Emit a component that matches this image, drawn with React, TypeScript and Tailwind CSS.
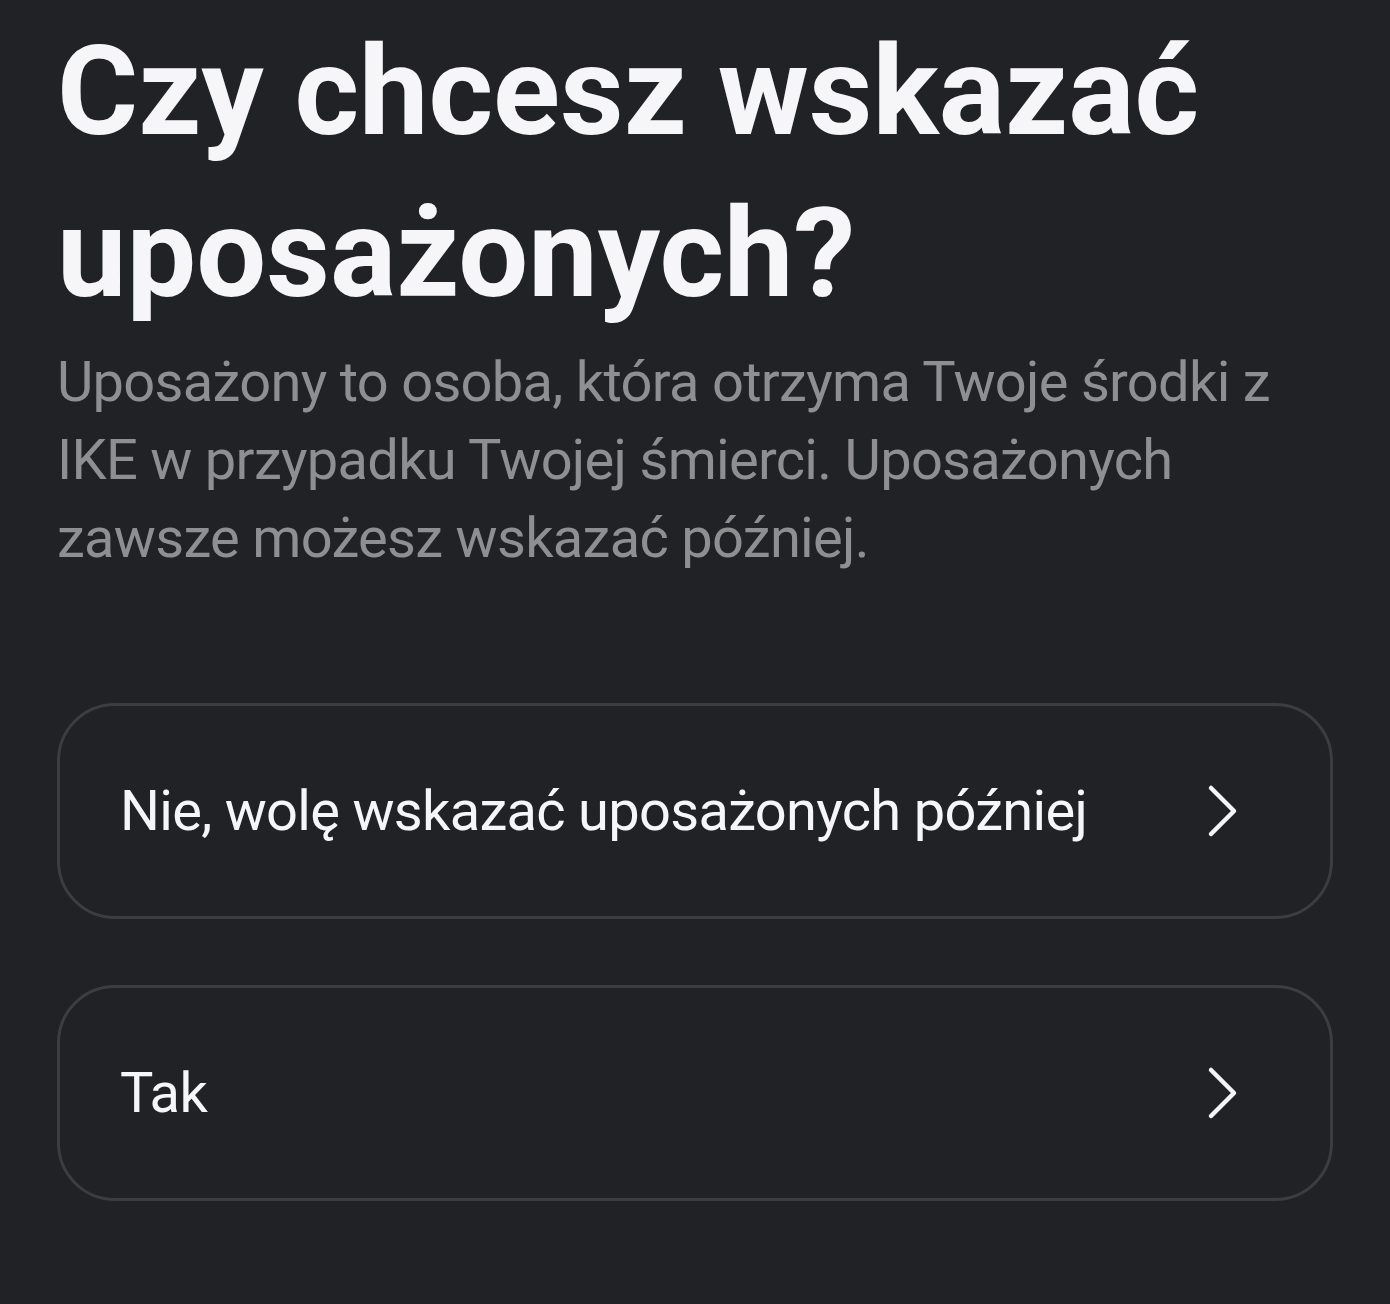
const options = ['Nie, wolę wskazać uposażonych później', 'Tak']

function Chevron() {
  return (
    <svg width="34" height="56" viewBox="0 0 34 56" fill="none" className="shrink-0">
      <path d="M5 5 L28 28 L5 51" stroke="#f5f5f7" strokeWidth="4.5" strokeLinecap="round" strokeLinejoin="round" />
    </svg>
  )
}

export default function App() {
  return (
    <div className="min-h-[1304px] w-[1390px] bg-[#212225] px-[57px] pt-[11px] font-['Roboto',sans-serif]">
      <h1 className="text-[124px] font-bold leading-[162px] text-[#f6f6f8]">
        Czy chcesz wskazać uposażonych?
      </h1>
      <p className="mt-[8px] text-[56px] leading-[78px] tracking-[-0.7px] text-[#8f8f91]">
        Uposażony to osoba, która otrzyma Twoje środki z IKE w przypadku Twojej śmierci. Uposażonych zawsze możesz wskazać później.
      </p>

      <div className="mt-[126px] flex flex-col gap-[66px]">
        {options.map((label) => (
          <button
            key={label}
            className="flex h-[216px] w-full items-center justify-between rounded-[58px] border-[3px] border-[#3c3d40] pl-[60px] pr-[90px] text-left"
          >
            <span className="text-[56px] leading-none tracking-[-0.7px] text-[#f6f6f8]">{label}</span>
            <Chevron />
          </button>
        ))}
      </div>
    </div>
  )
}
